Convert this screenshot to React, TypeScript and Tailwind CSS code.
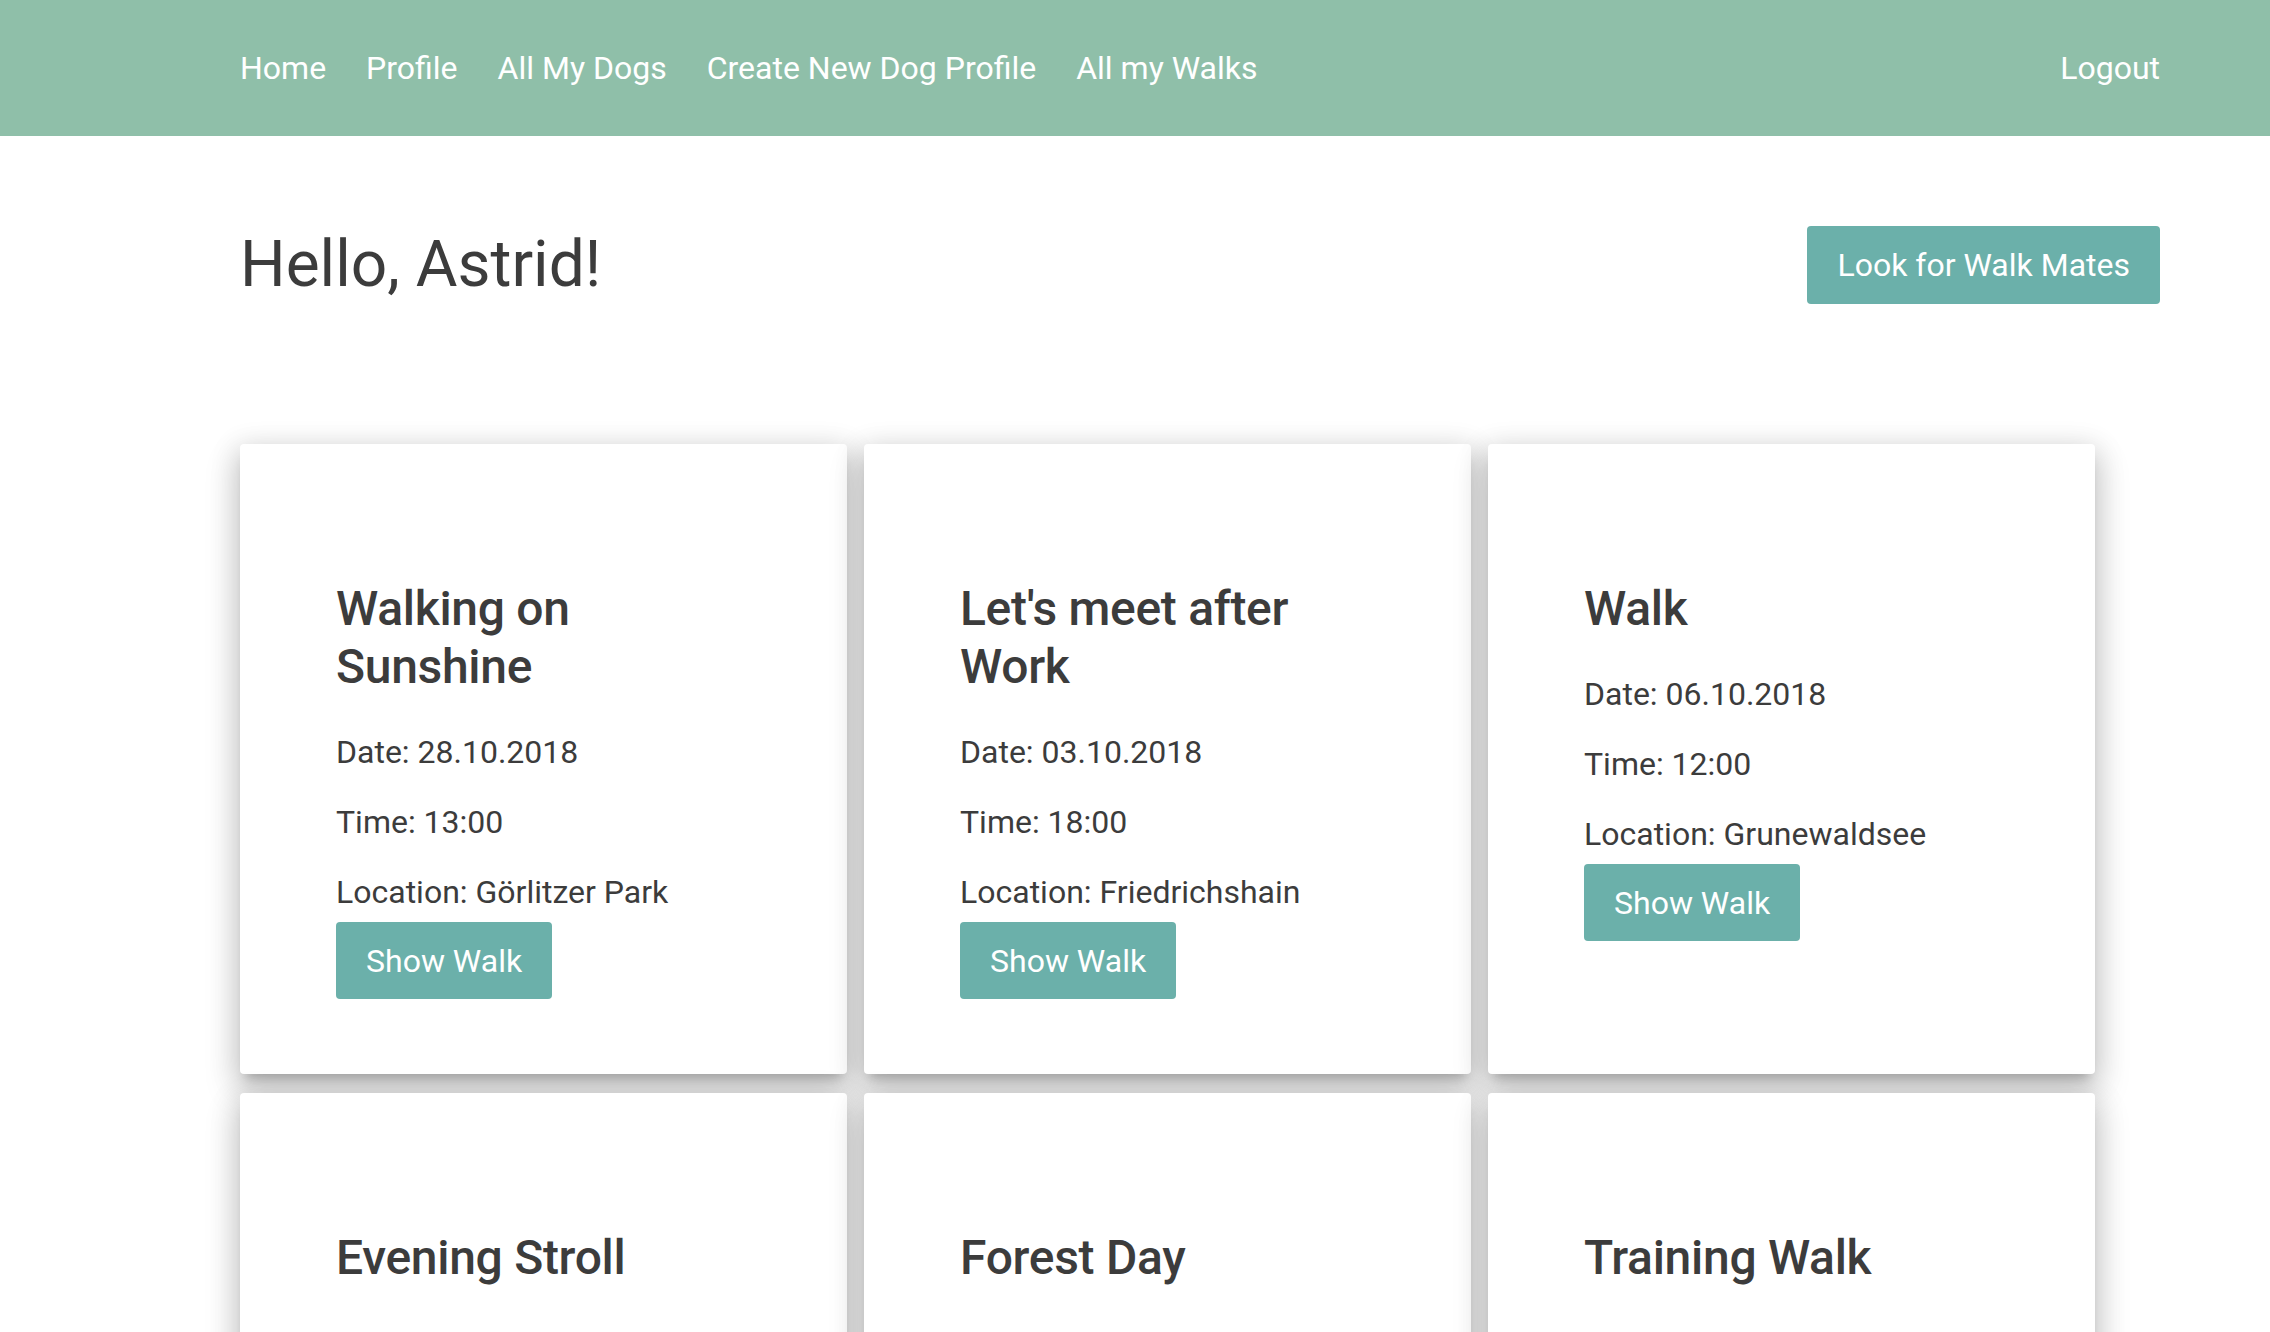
import React from 'react';

type Walk = {
  id: number;
  title: string;
  date: string;
  time: string;
  location: string;
};

const walks: Walk[] = [
  { id: 1, title: 'Walking on Sunshine', date: '28.10.2018', time: '13:00', location: 'Görlitzer Park' },
  { id: 2, title: "Let's meet after Work", date: '03.10.2018', time: '18:00', location: 'Friedrichshain' },
  { id: 3, title: 'Walk', date: '06.10.2018', time: '12:00', location: 'Grunewaldsee' },
  { id: 4, title: 'Evening Stroll', date: '25.10.2018', time: '19:30', location: 'Tempelhofer Feld' },
  { id: 5, title: 'Forest Day', date: '20.10.2018', time: '10:00', location: 'Grunewald' },
  { id: 6, title: 'Training Walk', date: '20.10.2018', time: '09:00', location: 'Volkspark' },
];

const navLinks = ['Home', 'Profile', 'All My Dogs', 'Create New Dog Profile', 'All my Walks'];

const WalkCard: React.FC<{ walk: Walk }> = ({ walk }) => (
  <div className="bg-white rounded-[4px] pt-[136px] pb-[75px] px-[96px] shadow-[0_16px_34px_4px_rgba(0,0,0,0.14),0_6px_28px_4px_rgba(0,0,0,0.12),0_10px_10px_-6px_rgba(0,0,0,0.2)]">
    <h3 className="text-[48px] leading-[58px] font-medium tracking-[-0.3px] mb-[32px]">{walk.title}</h3>
    <p className="text-[32px] leading-[48px]">Date: {walk.date}</p>
    <p className="text-[32px] leading-[48px] mt-[22px]">Time: {walk.time}</p>
    <p className="text-[32px] leading-[48px] mt-[22px]">Location: {walk.location}</p>
    <button className="mt-[6px] h-[77px] px-[30px] rounded-[4px] bg-[#6bb0aa] text-white text-[32px]">
      Show Walk
    </button>
  </div>
);

export default function App() {
  return (
    <div className="min-h-screen bg-white text-[#3c3c3c] font-['Roboto',sans-serif]">
      <nav className="h-[136px] bg-[#8fbfa9] flex items-center pl-[240px] pr-[110px]">
        <ul className="flex gap-[40px]">
          {navLinks.map((link) => (
            <li key={link}>
              <a href="#" className="text-white text-[32px]">{link}</a>
            </li>
          ))}
        </ul>
        <a href="#" className="ml-auto text-white text-[32px]">Logout</a>
      </nav>

      <main className="pl-[240px] pr-[110px]">
        <div className="mt-[90px] flex items-center justify-between">
          <h1 className="text-[64px] leading-none">Hello, Astrid!</h1>
          <button className="h-[78px] px-[30px] rounded-[4px] bg-[#6bb0aa] text-white text-[32px]">
            Look for Walk Mates
          </button>
        </div>

        <div className="mt-[140px] grid grid-cols-[repeat(3,607px)] gap-x-[17px] gap-y-[19px] pb-[60px]">
          {walks.map((walk) => (
            <WalkCard key={walk.id} walk={walk} />
          ))}
        </div>
      </main>
    </div>
  );
}
